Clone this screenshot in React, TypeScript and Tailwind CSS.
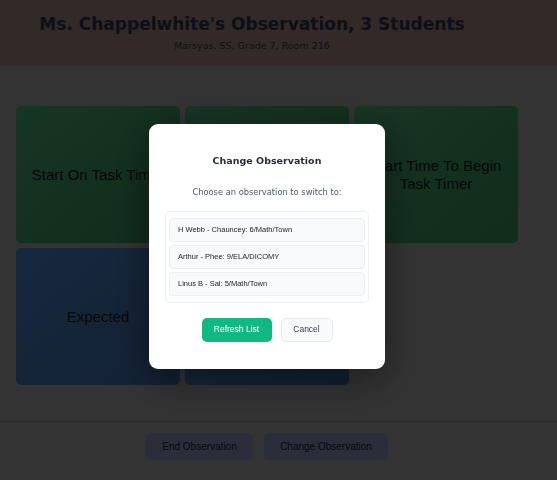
import { useState } from "react";

const students = [
    "H Webb - Chauncey: 6/Math/Town",
    "Arthur - Phee: 9/ELA/DICOMY",
    "Linus B - Sal: 5/Math/Town",
];

const tiles = [
    { label: "Start On Task Timer", color: "green" },
    { label: "Start Off Task Timer", color: "green" },
    { label: "Start Time To Begin Task Timer", color: "green" },
    { label: "Expected", color: "blue" },
    { label: "Unexpected", color: "blue" },
];

export default function App() {
    const [open, setOpen] = useState<boolean>(true);

    return (
        <div className="relative min-h-screen w-full overflow-hidden bg-[#d6d6d6] font-['Liberation_Sans',Arial,sans-serif]">
            {/* header */}
            <div className="h-[66px] bg-[#d0abab]">
                <div className="flex w-[504px] flex-col items-center pt-[12px] font-['DejaVu_Sans',sans-serif]">
                    <h1 className="text-[17px] font-bold leading-[24px] text-[#3a4560]">Ms. Chappelwhite's Observation, 3 Students</h1>
                    <div className="mt-[3px] text-[9.5px] leading-[14px] text-[#444a58]">Marsyas, SS, Grade 7, Room 216</div>
                </div>
            </div>

            <div className="w-[534px] px-4 pt-10">
                <div className="grid grid-cols-3 gap-[5px]">
                    {tiles.map((t) => (
                        <button
                            key={t.label}
                            className={
                                t.color === "green"
                                    ? "flex h-[137px] items-center justify-center rounded-[5px] bg-gradient-to-br from-[#5ce094] to-[#48b872] px-[6px] text-center text-[15px] leading-[18px] text-[#222]"
                                    : "flex h-[137px] items-center justify-center rounded-[5px] bg-gradient-to-br from-[#60aaff] to-[#4e8ad8] px-[6px] text-center text-[15px] leading-[18px] text-[#222]"
                            }
                        >
                            {t.label}
                        </button>
                    ))}
                </div>
            </div>

            <div className="mt-[36px] border-t border-[#b4b4b4]">
                <div className="flex w-[534px] justify-center gap-[11px] pt-[11px]">
                    <button className="h-[27px] w-[107px] rounded-[5px] bg-[#b4bcf6] text-[10px] text-[#2a2a3a]">End Observation</button>
                    <button onClick={() => setOpen(true)} className="h-[27px] w-[124px] rounded-[5px] bg-[#b4bcf6] text-[10px] text-[#2a2a3a]">Change Observation</button>
                </div>
            </div>

            {open && (
                <div className="fixed inset-0 bg-black/[0.76]">
                    <div className="flex h-full w-[534px] items-center justify-center">
                        <div className="mt-[12px] flex w-[236px] flex-col items-center rounded-[9px] bg-white px-4 pb-[27px] pt-[26px] shadow-[0_10px_40px_rgba(0,0,0,0.45)]">
                            <h2 className="font-['DejaVu_Sans',sans-serif] text-[9.5px] font-bold leading-[22px] text-[#1f2937]">Change Observation</h2>
                            <p className="mt-[14px] font-['DejaVu_Sans',sans-serif] text-[8.3px] leading-[12px] text-[#4b5563]">Choose an observation to switch to:</p>
                            <div className="mt-[13px] flex w-full flex-col gap-[3px] rounded-[5px] border border-[#eef0f3] px-[3px] pb-[6px] pt-[6px]">
                                {students.map((s) => (
                                    <div key={s} className="flex h-[24px] items-center rounded-[4px] border border-[#eceef1] bg-[#f8f9fa] px-[8px] text-[7.5px] text-[#222]">
                                        {s}
                                    </div>
                                ))}
                            </div>
                            <div className="mt-[15px] flex gap-[9px]">
                                <button className="h-[24px] w-[70px] rounded-[5px] bg-[#10b981] text-[8.5px] text-white">Refresh List</button>
                                <button onClick={() => setOpen(false)} className="h-[24px] w-[52px] rounded-[5px] border border-[#e5e7eb] bg-[#f9fafb] text-[8.5px] text-[#374151]">Cancel</button>
                            </div>
                        </div>
                    </div>
                </div>
            )}
        </div>
    );
}
